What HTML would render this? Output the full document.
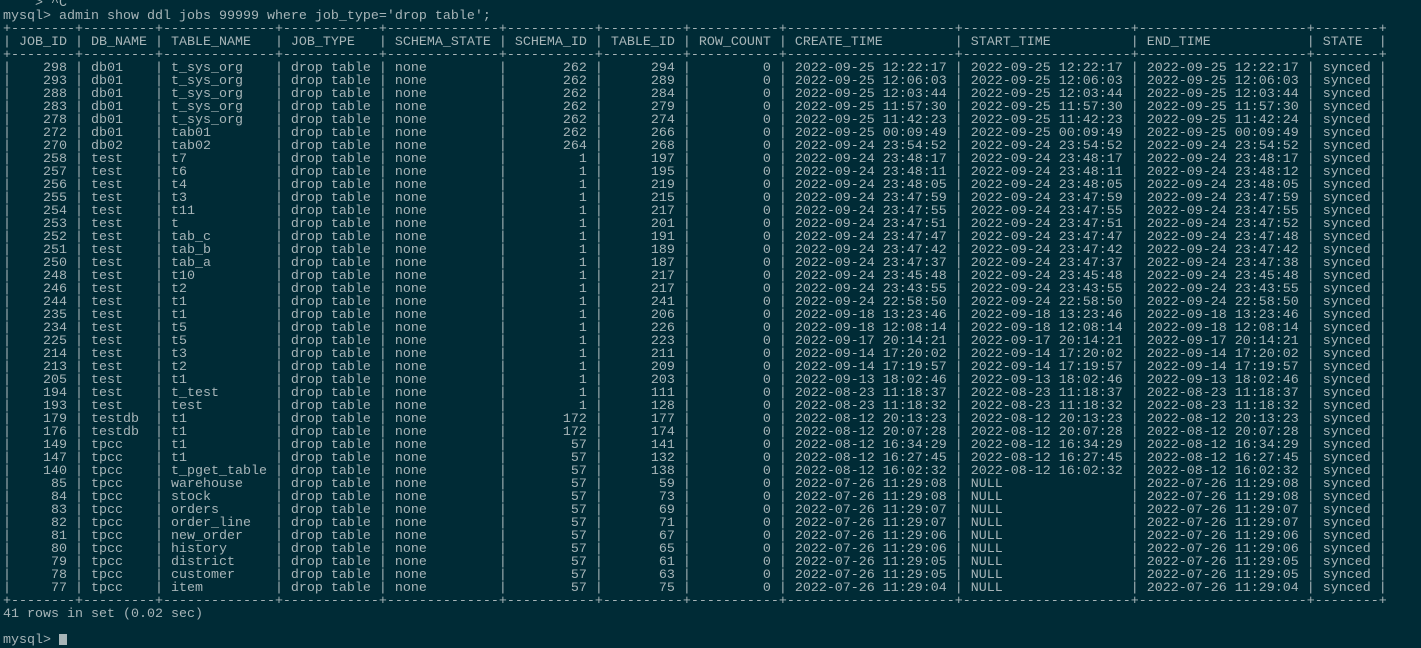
<!DOCTYPE html>
<html><head><meta charset="utf-8"><style>
html,body{margin:0;padding:0;background:#002b36;width:1421px;height:638px;overflow:hidden}
pre{margin:0;position:absolute;left:3px;top:-3px;font-family:"Liberation Mono","DejaVu Sans Mono",monospace;font-size:13.33px;line-height:13px;color:#a7b5b8;white-space:pre}
.c{display:inline-block;width:8px;height:11px;background:#a7b5b8;vertical-align:-2px}
</style></head><body><pre>    &gt; ^C
mysql&gt; admin show ddl jobs 99999 where job_type='drop table';
+--------+---------+--------------+------------+--------------+-----------+----------+-----------+---------------------+---------------------+---------------------+--------+
| JOB_ID | DB_NAME | TABLE_NAME   | JOB_TYPE   | SCHEMA_STATE | SCHEMA_ID | TABLE_ID | ROW_COUNT | CREATE_TIME         | START_TIME          | END_TIME            | STATE  |
+--------+---------+--------------+------------+--------------+-----------+----------+-----------+---------------------+---------------------+---------------------+--------+
|    298 | db01    | t_sys_org    | drop table | none         |       262 |      294 |         0 | 2022-09-25 12:22:17 | 2022-09-25 12:22:17 | 2022-09-25 12:22:17 | synced |
|    293 | db01    | t_sys_org    | drop table | none         |       262 |      289 |         0 | 2022-09-25 12:06:03 | 2022-09-25 12:06:03 | 2022-09-25 12:06:03 | synced |
|    288 | db01    | t_sys_org    | drop table | none         |       262 |      284 |         0 | 2022-09-25 12:03:44 | 2022-09-25 12:03:44 | 2022-09-25 12:03:44 | synced |
|    283 | db01    | t_sys_org    | drop table | none         |       262 |      279 |         0 | 2022-09-25 11:57:30 | 2022-09-25 11:57:30 | 2022-09-25 11:57:30 | synced |
|    278 | db01    | t_sys_org    | drop table | none         |       262 |      274 |         0 | 2022-09-25 11:42:23 | 2022-09-25 11:42:23 | 2022-09-25 11:42:24 | synced |
|    272 | db01    | tab01        | drop table | none         |       262 |      266 |         0 | 2022-09-25 00:09:49 | 2022-09-25 00:09:49 | 2022-09-25 00:09:49 | synced |
|    270 | db02    | tab02        | drop table | none         |       264 |      268 |         0 | 2022-09-24 23:54:52 | 2022-09-24 23:54:52 | 2022-09-24 23:54:52 | synced |
|    258 | test    | t7           | drop table | none         |         1 |      197 |         0 | 2022-09-24 23:48:17 | 2022-09-24 23:48:17 | 2022-09-24 23:48:17 | synced |
|    257 | test    | t6           | drop table | none         |         1 |      195 |         0 | 2022-09-24 23:48:11 | 2022-09-24 23:48:11 | 2022-09-24 23:48:12 | synced |
|    256 | test    | t4           | drop table | none         |         1 |      219 |         0 | 2022-09-24 23:48:05 | 2022-09-24 23:48:05 | 2022-09-24 23:48:05 | synced |
|    255 | test    | t3           | drop table | none         |         1 |      215 |         0 | 2022-09-24 23:47:59 | 2022-09-24 23:47:59 | 2022-09-24 23:47:59 | synced |
|    254 | test    | t11          | drop table | none         |         1 |      217 |         0 | 2022-09-24 23:47:55 | 2022-09-24 23:47:55 | 2022-09-24 23:47:55 | synced |
|    253 | test    | t            | drop table | none         |         1 |      201 |         0 | 2022-09-24 23:47:51 | 2022-09-24 23:47:51 | 2022-09-24 23:47:52 | synced |
|    252 | test    | tab_c        | drop table | none         |         1 |      191 |         0 | 2022-09-24 23:47:47 | 2022-09-24 23:47:47 | 2022-09-24 23:47:48 | synced |
|    251 | test    | tab_b        | drop table | none         |         1 |      189 |         0 | 2022-09-24 23:47:42 | 2022-09-24 23:47:42 | 2022-09-24 23:47:42 | synced |
|    250 | test    | tab_a        | drop table | none         |         1 |      187 |         0 | 2022-09-24 23:47:37 | 2022-09-24 23:47:37 | 2022-09-24 23:47:38 | synced |
|    248 | test    | t10          | drop table | none         |         1 |      217 |         0 | 2022-09-24 23:45:48 | 2022-09-24 23:45:48 | 2022-09-24 23:45:48 | synced |
|    246 | test    | t2           | drop table | none         |         1 |      217 |         0 | 2022-09-24 23:43:55 | 2022-09-24 23:43:55 | 2022-09-24 23:43:55 | synced |
|    244 | test    | t1           | drop table | none         |         1 |      241 |         0 | 2022-09-24 22:58:50 | 2022-09-24 22:58:50 | 2022-09-24 22:58:50 | synced |
|    235 | test    | t1           | drop table | none         |         1 |      206 |         0 | 2022-09-18 13:23:46 | 2022-09-18 13:23:46 | 2022-09-18 13:23:46 | synced |
|    234 | test    | t5           | drop table | none         |         1 |      226 |         0 | 2022-09-18 12:08:14 | 2022-09-18 12:08:14 | 2022-09-18 12:08:14 | synced |
|    225 | test    | t5           | drop table | none         |         1 |      223 |         0 | 2022-09-17 20:14:21 | 2022-09-17 20:14:21 | 2022-09-17 20:14:21 | synced |
|    214 | test    | t3           | drop table | none         |         1 |      211 |         0 | 2022-09-14 17:20:02 | 2022-09-14 17:20:02 | 2022-09-14 17:20:02 | synced |
|    213 | test    | t2           | drop table | none         |         1 |      209 |         0 | 2022-09-14 17:19:57 | 2022-09-14 17:19:57 | 2022-09-14 17:19:57 | synced |
|    205 | test    | t1           | drop table | none         |         1 |      203 |         0 | 2022-09-13 18:02:46 | 2022-09-13 18:02:46 | 2022-09-13 18:02:46 | synced |
|    194 | test    | t_test       | drop table | none         |         1 |      111 |         0 | 2022-08-23 11:18:37 | 2022-08-23 11:18:37 | 2022-08-23 11:18:37 | synced |
|    193 | test    | test         | drop table | none         |         1 |      128 |         0 | 2022-08-23 11:18:32 | 2022-08-23 11:18:32 | 2022-08-23 11:18:32 | synced |
|    179 | testdb  | t1           | drop table | none         |       172 |      177 |         0 | 2022-08-12 20:13:23 | 2022-08-12 20:13:23 | 2022-08-12 20:13:23 | synced |
|    176 | testdb  | t1           | drop table | none         |       172 |      174 |         0 | 2022-08-12 20:07:28 | 2022-08-12 20:07:28 | 2022-08-12 20:07:28 | synced |
|    149 | tpcc    | t1           | drop table | none         |        57 |      141 |         0 | 2022-08-12 16:34:29 | 2022-08-12 16:34:29 | 2022-08-12 16:34:29 | synced |
|    147 | tpcc    | t1           | drop table | none         |        57 |      132 |         0 | 2022-08-12 16:27:45 | 2022-08-12 16:27:45 | 2022-08-12 16:27:45 | synced |
|    140 | tpcc    | t_pget_table | drop table | none         |        57 |      138 |         0 | 2022-08-12 16:02:32 | 2022-08-12 16:02:32 | 2022-08-12 16:02:32 | synced |
|     85 | tpcc    | warehouse    | drop table | none         |        57 |       59 |         0 | 2022-07-26 11:29:08 | NULL                | 2022-07-26 11:29:08 | synced |
|     84 | tpcc    | stock        | drop table | none         |        57 |       73 |         0 | 2022-07-26 11:29:08 | NULL                | 2022-07-26 11:29:08 | synced |
|     83 | tpcc    | orders       | drop table | none         |        57 |       69 |         0 | 2022-07-26 11:29:07 | NULL                | 2022-07-26 11:29:07 | synced |
|     82 | tpcc    | order_line   | drop table | none         |        57 |       71 |         0 | 2022-07-26 11:29:07 | NULL                | 2022-07-26 11:29:07 | synced |
|     81 | tpcc    | new_order    | drop table | none         |        57 |       67 |         0 | 2022-07-26 11:29:06 | NULL                | 2022-07-26 11:29:06 | synced |
|     80 | tpcc    | history      | drop table | none         |        57 |       65 |         0 | 2022-07-26 11:29:06 | NULL                | 2022-07-26 11:29:06 | synced |
|     79 | tpcc    | district     | drop table | none         |        57 |       61 |         0 | 2022-07-26 11:29:05 | NULL                | 2022-07-26 11:29:05 | synced |
|     78 | tpcc    | customer     | drop table | none         |        57 |       63 |         0 | 2022-07-26 11:29:05 | NULL                | 2022-07-26 11:29:05 | synced |
|     77 | tpcc    | item         | drop table | none         |        57 |       75 |         0 | 2022-07-26 11:29:04 | NULL                | 2022-07-26 11:29:04 | synced |
+--------+---------+--------------+------------+--------------+-----------+----------+-----------+---------------------+---------------------+---------------------+--------+
41 rows in set (0.02 sec)

mysql&gt; <span class="c"></span></pre></body></html>
